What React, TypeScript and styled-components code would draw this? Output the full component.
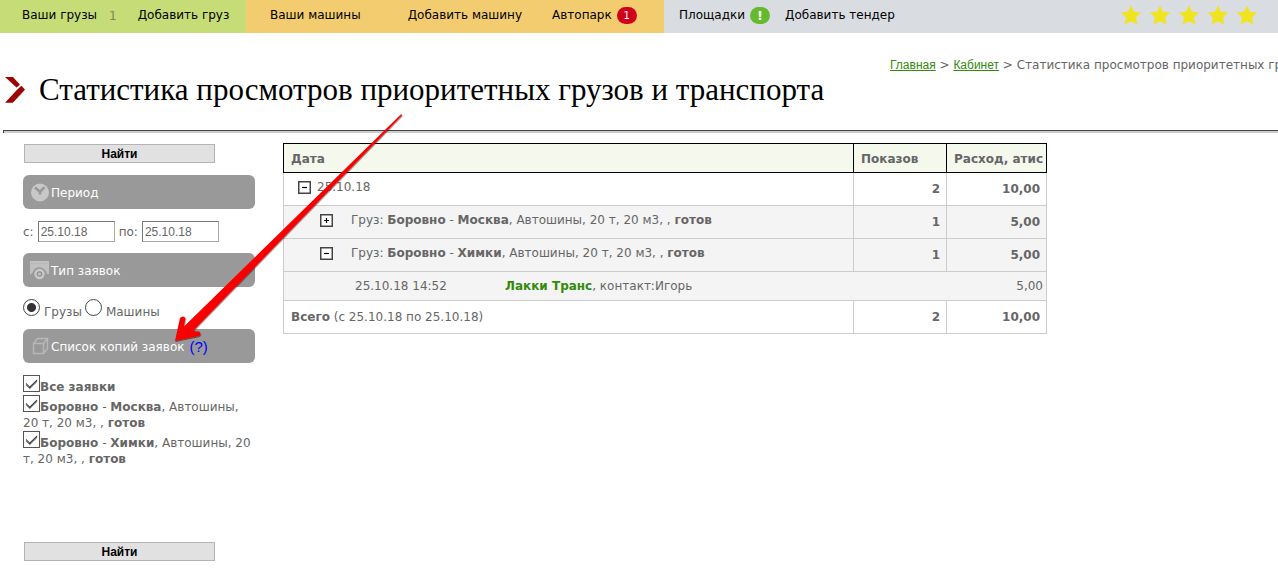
import React, { useState } from 'react';
import styled, { createGlobalStyle } from 'styled-components';

const GlobalStyle = createGlobalStyle`
  *, *::before, *::after { box-sizing: border-box; }
  body {
    margin: 0;
    background: #fff;
    color: #666;
    font: 12px/16px "DejaVu Sans", Verdana, sans-serif;
  }
  a { color: inherit; text-decoration: none; }
`;

const Page = styled.div`
  position: relative;
  min-height: 100vh;
  overflow: hidden;
`;

/* Top navigation */

const TopNav = styled.nav`
  display: flex;
  height: 33px;
  color: #000;
`;

const NavSection = styled.div<{ $bg: string; $basis?: string; $indent: string }>`
  display: flex;
  align-items: center;
  flex: ${p => (p.$basis ? `0 0 ${p.$basis}` : '1 1 auto')};
  padding: 0 0 3px ${p => p.$indent};
  background: ${p => p.$bg};
  white-space: nowrap;
`;

const NavItem = styled.a<{ $after?: string }>`
  display: flex;
  align-items: center;
  gap: 5px;
  margin-right: ${p => p.$after ?? '0'};
`;

const NavCount = styled.span`
  margin: 2px 21px 0 12px;
  color: #7c8b4b;
`;

const Badge = styled.span<{ $bg: string; $strong?: boolean }>`
  width: 20px;
  height: 17px;
  margin-top: 1px;
  border-radius: 9px;
  background: ${p => p.$bg};
  color: #fff;
  font-size: ${p => (p.$strong ? '13px' : '10px')};
  font-weight: ${p => (p.$strong ? 700 : 400)};
  line-height: 17px;
  text-align: center;
`;

const Stars = styled.div`
  display: flex;
  gap: 9px;
  margin: 0 21px 0 auto;
`;

/* Heading area */

const Breadcrumbs = styled.nav`
  width: 388px;
  margin: 24px 0 0 auto;
  overflow: hidden;
  white-space: nowrap;
`;

const CrumbLink = styled.a`
  color: #338a0b;
  font-family: "Liberation Sans", Arial, sans-serif;
  text-decoration: underline;
`;

const TitleRow = styled.div`
  display: flex;
  align-items: center;
  gap: 14px;
  padding: 0 5px;
`;

const Title = styled.h1`
  margin: 0;
  color: #000;
  font: 400 31px/34px "Liberation Serif", "Times New Roman", serif;
`;

const Divider = styled.hr`
  height: 3px;
  margin: 23px 0 0 3px;
  border: solid #444;
  border-width: 1px 0 0 1px;
  background: #ccc;
`;

/* Filters */

const Columns = styled.div`
  display: flex;
  align-items: flex-start;
  gap: 28px;
  padding: 10px 0 0 23px;
`;

const Filters = styled.form`
  flex: 0 0 232px;
`;

const FindButton = styled.button`
  display: block;
  width: 191px;
  height: 19px;
  margin: 1px 1px 12px;
  padding: 0;
  border: 1px solid #b4b4b4;
  background: #e1e1e1;
  color: #000;
  font: 700 12px/16px "Liberation Sans", Arial, sans-serif;
`;

const PanelTitle = styled.h2`
  display: flex;
  align-items: center;
  gap: 1px;
  height: 34px;
  margin: 11px 0 12px;
  padding: 1px 0 0 7px;
  border-radius: 6px;
  background: #999;
  color: #fff;
  font: inherit;
`;

const HelpLink = styled.a`
  margin-left: 4px;
  color: #00f;
  font: 15px/16px "Liberation Sans", Arial, sans-serif;
`;

const DateRow = styled.div`
  display: flex;
  align-items: center;
  gap: 4px;
`;

const DateInput = styled.input`
  width: 77px;
  height: 21px;
  padding: 0 2px;
  border: 1px solid;
  border-color: #777 #aaa #aaa #777;
  background: #fff;
  color: #666;
  font: 12px/16px "Liberation Sans", Arial, sans-serif;
`;

const Choices = styled.div`
  height: 19px;
`;

const ChoiceLabel = styled.label`
  margin-right: 3px;
`;

const Radio = styled.input`
  appearance: none;
  width: 17px;
  height: 17px;
  margin: 0 4px 0 0;
  border: 1px solid #444;
  border-radius: 50%;
  vertical-align: 0;
  background: #fff;
  &:checked { background: radial-gradient(circle, #333 0 4px, #fff 5px); }
`;

const RequestLabel = styled.label`
  display: block;
`;

const Checkbox = styled.input`
  appearance: none;
  width: 17px;
  height: 17px;
  margin: 0;
  border: 1px solid #555;
  vertical-align: -1px;
  background: #fff;
  &:checked::before {
    content: '';
    display: block;
    width: 11px;
    height: 6px;
    margin: 3px 0 0 2px;
    border: solid #333;
    border-width: 0 0 1px 1px;
    box-shadow: -1px 1px 0 #888;
    clip-path: inset(0 0 -1px -1px);
    transform: rotate(-45deg);
  }
`;

const FormFooter = styled.div`
  margin-top: 75px;
`;

/* Statistics table */

const Main = styled.main`
  flex: 1 1 auto;
  padding-right: 20px;
`;

const StatsTable = styled.table`
  width: 100%;
  max-width: 764px;
  border-collapse: collapse;
  table-layout: fixed;
`;

const Col = styled.col<{ $w?: string }>`
  width: ${p => p.$w ?? 'auto'};
`;

const Th = styled.th`
  height: 29px;
  padding: 2px 0 0 7px;
  border: 1px solid #000;
  background: #f4f8ed;
  text-align: left;
  white-space: nowrap;
`;

const Row = styled.tr<{ $shade?: boolean; $h?: string }>`
  height: ${p => p.$h ?? '33px'};
  background: ${p => (p.$shade ? '#f4f4f4' : '#fff')};
`;

const Td = styled.td`
  padding: 0 3px 0 7px;
  border: 1px solid #ccc;
`;

const NumTd = styled(Td)`
  padding: 0 6px;
  font-weight: 700;
  text-align: right;
`;

const Entry = styled.div<{ $level: number }>`
  display: flex;
  align-items: center;
  gap: ${p => (p.$level ? '18px' : '6px')};
  padding: 0 0 5px ${p => (p.$level ? '29px' : '7px')};
`;

const Toggle = styled.button`
  display: block;
  width: 13px;
  height: 13px;
  margin-top: 2px;
  padding: 0;
  border: 0;
  background: none;
`;

const Detail = styled.div`
  display: grid;
  grid-template-columns: 150px 1fr auto;
  padding-left: 64px;
`;

const CompanyLink = styled.a`
  color: #338a0b;
  font-weight: 700;
`;

const Pointer = styled.svg`
  position: absolute;
  top: 110px;
  left: 170px;
  pointer-events: none;
`;

const Star = () => (
  <svg width="20" height="20" viewBox="0 0 20 20" aria-hidden="true">
    <path fill="#f0e31f" d="M10 0.500 13 6.800 20 7.500 15 12.400 16.400 19.400 10 16.300 3.600 19.400 5 12.400 0 7.500 7 6.800Z" />
  </svg>
);

const Chevron = () => (
  <svg width="20" height="28" viewBox="0 0 20 28" aria-hidden="true">
    <path fill="#9d0404" d="M0 1H8L15 8.800 11.500 11.600ZM20 13.800 7.800 26.800H0L12.300 13.400 16.500 9.800Z" />
  </svg>
);

const ClockIcon = () => (
  <svg width="20" height="20" viewBox="0 0 20 20" aria-hidden="true">
    <circle cx="10" cy="9.500" r="9" fill="#c8c8c8" />
    <path d="M5 4.500 10 8.700 14.500 4.300M10 8.500V11.500" fill="none" stroke="#999" strokeWidth="2.600" />
  </svg>
);

const TruckIcon = () => (
  <svg width="20" height="20" viewBox="0 0 20 20" aria-hidden="true">
    <path fill="#c0c0c0" d="M0 0H19V13H17Q15 6.500 9.500 6.500T3 11L0 14Z" />
    <path d="M1 2.500H19" stroke="#b0b0b0" strokeWidth="1" strokeDasharray="1 1" />
    <circle cx="9.500" cy="13" r="6.400" fill="#999" />
    <circle cx="9.500" cy="13" r="4" fill="#909090" stroke="#c8c8c8" strokeWidth="2.400" />
    <circle cx="9.500" cy="13" r="1.500" fill="#c4c4c4" />
  </svg>
);

const CopiesIcon = () => (
  <svg width="20" height="20" viewBox="0 0 20 20" aria-hidden="true">
    <path d="M3.500 6.500H13.500V16.500H3.500ZM3.500 6.500 7.500 1.500H17.500V11.500L13.500 16.500M13.500 6.500 17.500 1.500" fill="none" stroke="#b8b8b8" strokeWidth="1.400" />
  </svg>
);

function ExpandButton({ open: initial }: { open: boolean }) {
  const [open, setOpen] = useState(initial);
  return (
    <Toggle type="button" aria-expanded={open} aria-label="Развернуть" onClick={() => setOpen(!open)}>
      <svg width="13" height="13" viewBox="0 0 13 13" aria-hidden="true" display="block">
        <rect x="0.750" y="0.750" width="11.500" height="11.500" fill="#fff" stroke="#444" strokeWidth="1.500" />
        <path d={open ? 'M4 6.500H9' : 'M4 6.500H9M6.500 4V9'} stroke="#000" strokeWidth="1.200" />
      </svg>
    </Toggle>
  );
}

const Cargo = ({ to }: { to: string }) => (
  <>
    <b>Боровно</b> - <b>{to}</b>, Автошины, 20 т, 20 м3, , <b>готов</b>
  </>
);

const title = 'Статистика просмотров приоритетных грузов и транспорта';

export default function App() {
  return (
    <Page>
      <GlobalStyle />
      <TopNav>
        <NavSection $bg="#c6dc77" $basis="246px" $indent="22px">
          <NavItem href="#">Ваши грузы</NavItem>
          <NavCount>1</NavCount>
          <NavItem href="#">Добавить груз</NavItem>
        </NavSection>
        <NavSection $bg="#f4cc70" $basis="418px" $indent="24px">
          <NavItem href="#" $after="47px">Ваши машины</NavItem>
          <NavItem href="#" $after="30px">Добавить машину</NavItem>
          <NavItem href="#">Автопарк <Badge $bg="#d0021b">1</Badge></NavItem>
        </NavSection>
        <NavSection $bg="#d9dce1" $indent="15px">
          <NavItem href="#" $after="15px">Площадки <Badge $bg="#65b92c" $strong>!</Badge></NavItem>
          <NavItem href="#">Добавить тендер</NavItem>
          <Stars role="img" aria-label="5 из 5">
            <Star /><Star /><Star /><Star /><Star />
          </Stars>
        </NavSection>
      </TopNav>

      <Breadcrumbs>
        <CrumbLink href="#">Главная</CrumbLink> &gt; <CrumbLink href="#">Кабинет</CrumbLink> &gt; {title}
      </Breadcrumbs>
      <TitleRow>
        <Chevron />
        <Title>{title}</Title>
      </TitleRow>
      <Divider />

      <Columns>
        <Filters onSubmit={e => e.preventDefault()}>
          <FindButton type="submit">Найти</FindButton>
          <PanelTitle><ClockIcon />Период</PanelTitle>
          <DateRow>
            <label htmlFor="from">с:</label>
            <DateInput id="from" defaultValue="25.10.18" />
            <label htmlFor="to">по:</label>
            <DateInput id="to" defaultValue="25.10.18" />
          </DateRow>
          <PanelTitle><TruckIcon />Тип заявок</PanelTitle>
          <Choices>
            <ChoiceLabel><Radio type="radio" name="kind" defaultChecked />Грузы</ChoiceLabel>
            <ChoiceLabel><Radio type="radio" name="kind" />Машины</ChoiceLabel>
          </Choices>
          <PanelTitle><CopiesIcon />Список копий заявок <HelpLink href="#">(?)</HelpLink></PanelTitle>
          <RequestLabel><Checkbox type="checkbox" defaultChecked /><b>Все заявки</b></RequestLabel>
          <RequestLabel><Checkbox type="checkbox" defaultChecked /><Cargo to="Москва" /></RequestLabel>
          <RequestLabel><Checkbox type="checkbox" defaultChecked /><Cargo to="Химки" /></RequestLabel>
          <FormFooter>
            <FindButton type="submit">Найти</FindButton>
          </FormFooter>
        </Filters>

        <Main>
          <StatsTable>
            <colgroup>
              <Col />
              <Col $w="93px" />
              <Col $w="100px" />
            </colgroup>
            <thead>
              <tr><Th>Дата</Th><Th>Показов</Th><Th>Расход, атис</Th></tr>
            </thead>
            <tbody>
              <Row>
                <Td><Entry $level={0}><ExpandButton open /><span>25.10.18</span></Entry></Td>
                <NumTd>2</NumTd>
                <NumTd>10,00</NumTd>
              </Row>
              <Row $shade>
                <Td><Entry $level={1}><ExpandButton open={false} /><span>Груз: <Cargo to="Москва" /></span></Entry></Td>
                <NumTd>1</NumTd>
                <NumTd>5,00</NumTd>
              </Row>
              <Row $shade>
                <Td><Entry $level={1}><ExpandButton open /><span>Груз: <Cargo to="Химки" /></span></Entry></Td>
                <NumTd>1</NumTd>
                <NumTd>5,00</NumTd>
              </Row>
              <Row $shade $h="29px">
                <Td colSpan={3}>
                  <Detail>
                    <span>25.10.18 14:52</span>
                    <span><CompanyLink href="#">Лакки Транс</CompanyLink>, контакт:Игорь</span>
                    <span>5,00</span>
                  </Detail>
                </Td>
              </Row>
              <Row>
                <Td><b>Всего</b> (с 25.10.18 по 25.10.18)</Td>
                <NumTd>2</NumTd>
                <NumTd>10,00</NumTd>
              </Row>
            </tbody>
          </StatsTable>
        </Main>
      </Columns>

      <Pointer width="240" height="240" viewBox="170 110 240 240" aria-hidden="true">
        <defs>
          <filter id="pointer-shadow" x="-5%" y="-5%" width="110%" height="110%">
            <feDropShadow dx="0.500" dy="1" stdDeviation="0.700" floodColor="#000" floodOpacity="0.500" />
          </filter>
        </defs>
        <path
          fill="#f80000"
          filter="url(#pointer-shadow)"
          d="M175 341 180 318Q183 315 185.500 318L184 326.500 401 114.300 402.300 115 193 331 199 331.500Q202 334 199 336Z"
        />
      </Pointer>
    </Page>
  );
}
